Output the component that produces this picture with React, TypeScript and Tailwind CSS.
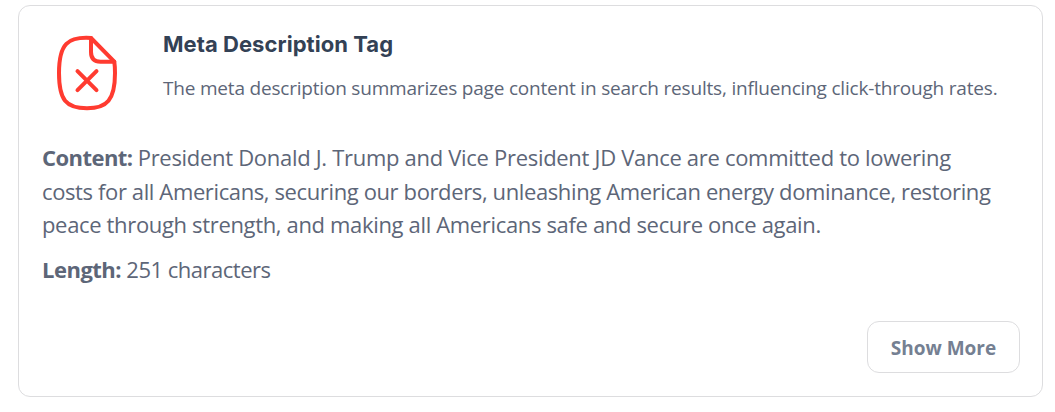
import { FC } from "react";

interface ContentLine {
  text: string;
  tracking: string;
}

interface Props {
  title: string;
  description: string;
  content: ContentLine[];
  length: number;
}

const FileErrorIcon = () => (
  <svg
    className="h-[76px] w-[62px]"
    viewBox="0 0 62 76"
    fill="none"
    stroke="#ff3b30"
    strokeWidth="4"
    strokeLinecap="round"
    strokeLinejoin="round"
  >
    <path d="M35 3C12 1.500 3 8.500 3 38C3 65 10 73.300 31 73.300C51 73.300 59 65 59 38C59 33.500 58.800 30 58.300 26.700L35 3Z" />
    <path d="M35 3V17Q35 26.700 44.500 26.700H58.300" />
    <path d="M21.500 36.200L40.500 55.200M40.500 36.200L21.500 55.200" />
  </svg>
);

const MetaCard: FC<Props> = ({ title, description, content, length }) => {
  return (
    <div className="mx-auto flex h-[392px] w-[1025px] flex-col rounded-xl border border-[#dddddf] bg-white px-[22px] pb-[23px] text-[#5d6678]">
      <div className="flex h-[124px] gap-[45px] pt-[29px] pl-[15px]">
        <FileErrorIcon />
        <div className="whitespace-nowrap">
          <h2 className="-mt-[5px] font-['Inter','Liberation_Sans',sans-serif] text-[22px] leading-[28px] font-bold tracking-[0.05px] text-[#334155]">
            {title}
          </h2>
          <p className="mt-[17px] text-[19px] leading-[26px] tracking-[-0.195px]">
            {description}
          </p>
        </div>
      </div>
      <div className="pl-px text-[22px] leading-[33.500px] whitespace-nowrap">
        <p className="mt-[11px]">
          <strong className="font-bold tracking-[-0.550px]">Content: </strong>
          {content.map(({ text, tracking }) => (
            <span key={text} className={tracking}>
              {text}
              <br />
            </span>
          ))}
        </p>
        <p className="mt-[11px] tracking-[-0.500px]">
          <strong className="font-bold">Length:</strong> {length} characters
        </p>
      </div>
      <button className="mt-auto h-[52px] w-[153px] self-end rounded-xl border border-[#dddddf] pt-[2px] text-[19px] font-bold text-[#758092]">
        Show More
      </button>
    </div>
  );
};

export default function App() {
  return (
    <main className="h-[412px] overflow-hidden bg-white pt-[5px] pl-[6px] font-['Open_Sans','Noto_Sans',sans-serif]">
      <MetaCard
        title="Meta Description Tag"
        description="The meta description summarizes page content in search results, influencing click-through rates."
        content={[
          {
            text: "President Donald J. Trump and Vice President JD Vance are committed to lowering",
            tracking: "tracking-[-0.300px]",
          },
          {
            text: "costs for all Americans, securing our borders, unleashing American energy dominance, restoring",
            tracking: "tracking-[-0.380px]",
          },
          {
            text: "peace through strength, and making all Americans safe and secure once again.",
            tracking: "tracking-[-0.340px]",
          },
        ]}
        length={251}
      />
    </main>
  );
}
